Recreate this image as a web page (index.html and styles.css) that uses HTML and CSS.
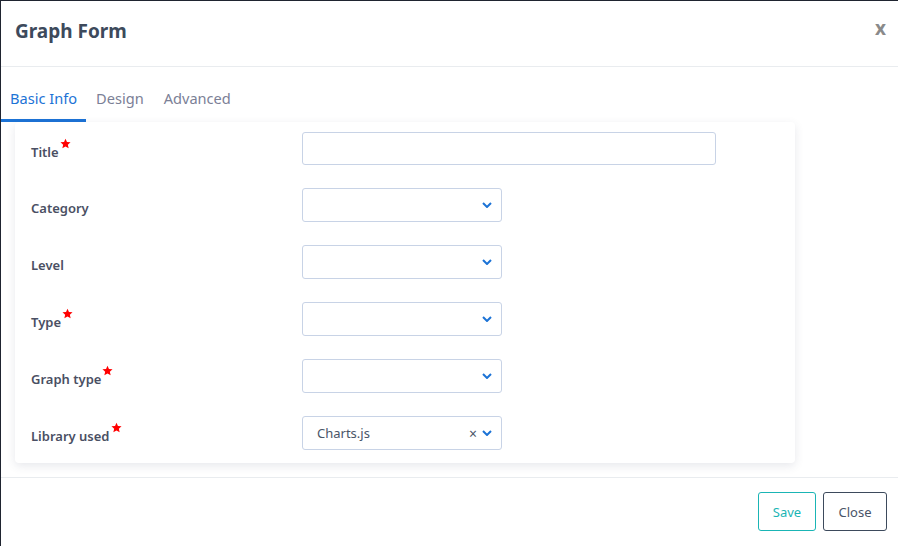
FILE: index.html
```html
<!DOCTYPE html>
<html>
<head>
<meta charset="utf-8">
<link rel="stylesheet" href="styles.css">
</head>
<body>
<div class="modal">
  <div class="modal-header">
    <h2 class="modal-title">Graph Form</h2>
    <span class="modal-close">x</span>
  </div>
  <div class="tabs">
    <div class="tab active">Basic Info</div>
    <div class="tab">Design</div>
    <div class="tab">Advanced</div>
  </div>
  <div class="card">
    <div class="form-grid">
      <label class="lbl">Title<svg class="star" viewBox="0 0 24 24"><path d="M12 1.5l3.2 7.2 7.8.7-5.9 5.2 1.8 7.7L12 18.3l-6.9 4 1.8-7.7L1 9.4l7.8-.7z"/></svg></label>
      <div class="input wide"></div>

      <label class="lbl">Category</label>
      <div class="input select"><span class="val"></span><svg class="chev" viewBox="0 0 10 6"><path d="M1 1l4 4 4-4"/></svg></div>

      <label class="lbl">Level</label>
      <div class="input select"><span class="val"></span><svg class="chev" viewBox="0 0 10 6"><path d="M1 1l4 4 4-4"/></svg></div>

      <label class="lbl">Type<svg class="star" viewBox="0 0 24 24"><path d="M12 1.5l3.2 7.2 7.8.7-5.9 5.2 1.8 7.7L12 18.3l-6.9 4 1.8-7.7L1 9.4l7.8-.7z"/></svg></label>
      <div class="input select"><span class="val"></span><svg class="chev" viewBox="0 0 10 6"><path d="M1 1l4 4 4-4"/></svg></div>

      <label class="lbl">Graph type<svg class="star" viewBox="0 0 24 24"><path d="M12 1.5l3.2 7.2 7.8.7-5.9 5.2 1.8 7.7L12 18.3l-6.9 4 1.8-7.7L1 9.4l7.8-.7z"/></svg></label>
      <div class="input select"><span class="val"></span><svg class="chev" viewBox="0 0 10 6"><path d="M1 1l4 4 4-4"/></svg></div>

      <label class="lbl">Library used<svg class="star" viewBox="0 0 24 24"><path d="M12 1.5l3.2 7.2 7.8.7-5.9 5.2 1.8 7.7L12 18.3l-6.9 4 1.8-7.7L1 9.4l7.8-.7z"/></svg></label>
      <div class="input select"><span class="val">Charts.js</span><span class="clear">×</span><svg class="chev" viewBox="0 0 10 6"><path d="M1 1l4 4 4-4"/></svg></div>
    </div>
  </div>
  <div class="modal-footer">
    <button class="btn btn-save">Save</button>
    <button class="btn btn-close">Close</button>
  </div>
</div>
</body>
</html>
```
FILE: styles.css
```css
* { box-sizing: border-box; }
html, body { margin: 0; height: 100%; }
body {
  background: #1f2430;
  font-family: "Segoe UI", "Noto Sans", "Open Sans", sans-serif;
  overflow: hidden;
}
.modal {
  margin: 1px 0 0 1px;
  height: 545px;
  background: #fff;
  display: flex;
  flex-direction: column;
}
.modal-header {
  height: 66px;
  display: flex;
  align-items: flex-start;
  justify-content: space-between;
  padding: 17px 12px 0 14px;
  border-bottom: 1px solid #e9ecef;
}
.modal-title {
  margin: 0;
  font-size: 19px;
  font-weight: 700;
  color: #3d4a5c;
  line-height: 26px;
}
.modal-close {
  font-size: 19px;
  font-weight: 700;
  color: #8a8a8a;
  line-height: 20px;
}
.tabs {
  display: flex;
  height: 55px;
}
.tab {
  padding: 21px 10px 0 10px;
  font-size: 14.6px;
  color: #7b8096;
  line-height: 20px;
}
.tab.active {
  color: #1c73d6;
  border-bottom: 3px solid #1c73d6;
  padding-left: 9px;
  padding-right: 9px;
}
.card {
  margin: 0 103px 0 14px;
  background: #fff;
  border-radius: 4px;
  box-shadow: 0 3px 10px rgba(60, 64, 100, 0.12);
  padding: 10px 16px 13px 16px;
}
.form-grid {
  display: grid;
  grid-template-columns: 271px 1fr;
  row-gap: 23px;
  align-items: center;
}
.lbl {
  font-size: 13px;
  font-weight: 600;
  color: #4a4f63;
  padding-top: 6px;
  display: flex;
  align-items: flex-start;
}
.star {
  width: 11px;
  height: 11px;
  fill: #ff0000;
  margin-left: 1px;
  margin-top: -5px;
}
.input {
  height: 34px;
  border: 1px solid #c8d3e6;
  border-radius: 3px;
  background: #fff;
  width: 200px;
}
.input.wide { width: 414px; height: 33px; }
.select {
  display: flex;
  align-items: center;
  padding: 0 9px 0 14px;
}
.val {
  flex: 1;
  font-size: 13px;
  color: #4a5568;
}
.clear {
  font-size: 14px;
  color: #4a5568;
  margin-right: 5px;
  line-height: 1;
  padding-top: 2px;
}
.chev {
  width: 10px;
  height: 6px;
  fill: none;
  stroke: #1c73d6;
  stroke-width: 2;
}
.modal-footer {
  margin-top: 14px;
  border-top: 1px solid #e9ecef;
  display: flex;
  justify-content: flex-end;
  gap: 7px;
  padding: 14px 11px 0 0;
}
.btn {
  height: 39px;
  background: #fff;
  border-radius: 3px;
  font-family: inherit;
  font-size: 13px;
  padding: 0 12px;
}
.btn-save {
  width: 58px;
  border: 1px solid #1ab5b5;
  color: #1ab5b5;
}
.btn-close {
  width: 64px;
  border: 1px solid #3d4a5c;
  color: #4a5568;
}
```
